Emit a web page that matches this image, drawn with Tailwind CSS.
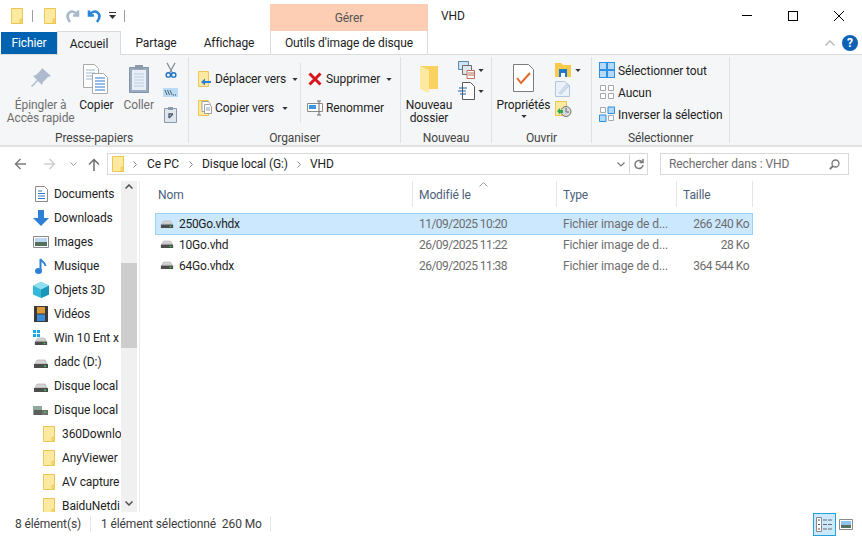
<!DOCTYPE html>
<html lang="fr">
<head>
<meta charset="UTF-8">
<title>VHD</title>
<script src="https://cdn.jsdelivr.net/npm/@tailwindcss/browser@4"></script>
</head>
<body class="bg-white">
<svg width="0" height="0" class="absolute">
  <defs>
    <symbol id="folder" viewBox="0 0 12 16">
      <path d="M.5.500h11v15H.5z" fill="#fde9a0" stroke="#ebc655"/>
      <path d="M9 11h2.500v4.500H9z" fill="#fbd35f" stroke="#ebc655" stroke-width=".6"/>
    </symbol>
    <symbol id="drive" viewBox="0 0 16 10">
      <path d="M2 4.500 4 1h8l2 3.500z" fill="#d4d4d4" stroke="#a8a8a8" stroke-width=".6"/>
      <path d="M1 5h14v4H1z" fill="#4d4d4d"/>
      <path d="M11 6.500h2v1.500h-2z" fill="#35d04a"/>
    </symbol>
    <symbol id="caret" viewBox="0 0 7 4"><path d="M0 0h7L3.500 4z" fill="#333"/></symbol>
  </defs>
</svg>

<div class="w-[862px] h-[536px] overflow-hidden flex flex-col bg-white text-[#1e1e1e] text-[12px] leading-[16px] tracking-[-0.1px] whitespace-nowrap font-['Roboto',sans-serif]">

  <!-- title bar -->
  <div class="h-[31px] flex shrink-0">
    <div class="w-[270px] flex items-center pl-[11px]">
      <svg class="w-[12px] h-[16px]"><use href="#folder"/></svg>
      <div class="w-px h-[12px] bg-[#a0a0a0] ml-[9px]"></div>
      <svg class="w-[12px] h-[16px] ml-[11px]"><use href="#folder"/></svg>
      <svg class="w-[16px] h-[16px] ml-[9px]" viewBox="0 0 16 16"><path d="M13 2.500v5H8M12.500 7C11 4 7 2.500 4.500 4.500 2 6.500 2 10 5 14" fill="none" stroke="#a9b8c9" stroke-width="2.600"/></svg>
      <svg class="w-[16px] h-[16px] ml-[5px]" viewBox="0 0 16 16"><path d="M3 2.500v5h5M3.500 7C5 4 9 2.500 11.500 4.500 14 6.500 14 10 11 14" fill="none" stroke="#2b84d6" stroke-width="2.600"/></svg>
      <svg class="w-[7px] h-[8px] ml-[7px]" viewBox="0 0 7 8"><path d="M0 0h7v1H0zM0 3h7L3.500 7z" fill="#333"/></svg>
      <div class="w-px h-[12px] bg-[#a0a0a0] ml-[8px]"></div>
    </div>
    <div class="w-[158px] mt-[4px] bg-[#fdcdb4] flex items-center justify-center text-[#555]">Gérer</div>
    <div class="pl-[13px] pt-[8px]">VHD</div>
    <div class="ml-auto flex">
      <div class="w-[46px] flex items-center justify-center"><div class="w-[10px] h-px bg-black"></div></div>
      <div class="w-[46px] flex items-center justify-center"><div class="w-[10px] h-[10px] border border-black"></div></div>
      <div class="w-[46px] flex items-center justify-center">
        <svg class="w-[10px] h-[10px]" viewBox="0 0 10 10"><path d="M0 0l10 10M10 0 0 10" stroke="#000" fill="none"/></svg>
      </div>
    </div>
  </div>

  <!-- tabs -->
  <div class="h-[24px] shrink-0 flex border-b border-[#dadbdc] pl-px">
    <div class="w-[56px] h-[22px] mt-px bg-[#0063b1] text-white flex items-center justify-center">Fichier</div>
    <div class="w-[64px] h-[24px] bg-[#f5f6f7] border border-b-0 border-[#dadbdc] flex items-center justify-center">Accueil</div>
    <div class="w-[70px] flex items-center justify-center">Partage</div>
    <div class="w-[76px] flex items-center justify-center">Affichage</div>
    <div class="w-[3px]"></div>
    <div class="w-[158px] border-l border-r border-[#dadbdc] flex items-center justify-center">Outils d'image de disque</div>
    <div class="ml-auto flex items-center pr-[4px] gap-[7px]">
      <svg class="w-[10px] h-[6px]" viewBox="0 0 10 6"><path d="M.5 5.500 5 1l4.500 4.500" fill="none" stroke="#b5b5b5" stroke-width="1.300"/></svg>
      <div class="w-[16px] h-[16px] rounded-full bg-[#0d62b5] text-white text-[12px] font-bold flex items-center justify-center">?</div>
    </div>
  </div>

  <!-- ribbon -->
  <div class="h-[92px] shrink-0 bg-[#f5f6f7] border-b-2 border-[#e1e2e3] flex pt-[2px] text-[#1e1e1e]">

    <!-- presse-papiers -->
    <div class="w-[189px] h-[86px] border-r border-[#e0e1e2] flex flex-col">
      <div class="flex-1 flex">
        <div class="w-[80px] flex flex-col items-center text-[#6f6f6f] pl-[2px]">
          <svg class="w-[22px] h-[22px] mt-[10px] mb-[10px]" viewBox="0 0 22 22"><path d="M12 1l9 8-3 1-5 5-1 3-4-4-6 6-1-1 6-6-4-4 3-1 5-5z" fill="#aebace"/></svg>
          <div class="text-center leading-[13px]">Épingler à<br>Accès rapide</div>
        </div>
        <div class="w-[32px] flex flex-col items-center pl-[2px]">
          <svg class="w-[26px] h-[30px] mt-[7px] mb-[5px]" viewBox="0 0 26 30"><path d="M.5.500h11l4 4v19H.500z" fill="#fff" stroke="#a9a9a9"/><path d="M3 6h9M3 9h9M3 12h9M3 15h9" stroke="#9bb5d8"/><path d="M9.500 9.500h11l4 4v16h-15z" fill="#fff" stroke="#a9a9a9"/><path d="M12 14h10M12 17h10M12 20h10M12 23h10M12 26h10" stroke="#2f78d0"/></svg>
          <div class="leading-[13px]">Copier</div>
        </div>
        <div class="w-[52px] flex flex-col items-center text-[#6f6f6f] pl-[3px]">
          <svg class="w-[20px] h-[29px] mt-[7px] mb-[6px]" viewBox="0 0 20 29"><path d="M.5 3.500h19v25H.500z" fill="#9cacc0" stroke="#8293a8"/><path d="M3 6h14v20H3z" fill="#e8eef6"/><path d="M5 10h10M5 13h10M5 16h10M5 19h10M5 22h10" stroke="#bccbe0"/><path d="M6 1h8v4H6z" fill="#8b99ab"/></svg>
          <div class="leading-[13px]">Coller</div>
        </div>
        <div class="flex-1 flex flex-col items-center pt-[5px] pr-[10px]">
          <svg class="w-[12px] h-[16px] mb-[10px]" viewBox="0 0 13 18"><path d="M2 1l6 11M11 1 5 12" stroke="#7f8a96" stroke-width="1.300" fill="none"/><circle cx="3.500" cy="14.500" r="2.500" fill="none" stroke="#1f74c7" stroke-width="1.600"/><circle cx="9.500" cy="14.500" r="2.500" fill="none" stroke="#1f74c7" stroke-width="1.600"/></svg>
          <svg class="w-[15px] h-[9px] mb-[10px]" viewBox="0 0 15 9"><path d="M0 0h15v9H0z" fill="#b8dcf6"/><path d="M2 2l2 5M4.500 2l2 5M7 2l2 5" stroke="#344" stroke-width=".8"/><path d="M10 7h1M12 7h1" stroke="#344"/></svg>
          <svg class="w-[13px] h-[16px]" viewBox="0 0 13 16"><path d="M.5 1.500h12v14H.5z" fill="#dfe6ee" stroke="#8a99ab"/><path d="M4 0h5v3H4z" fill="#8a99ab"/><path d="M5 11V7h4M9 7l-4 4" stroke="#4d5c70" stroke-width="1.300" fill="none"/></svg>
        </div>
      </div>
      <div class="h-[14px] pt-px text-center text-[#444]">Presse-papiers</div>
    </div>

    <!-- organiser -->
    <div class="w-[212px] h-[86px] border-r border-[#e0e1e2] flex flex-col">
      <div class="flex-1 flex">
        <div class="w-[112px] h-[60px] mt-[6px] border-r border-[#e0e1e2] pl-[9px] pt-[8px] flex flex-col gap-[13px]">
          <div class="flex items-center h-[16px]">
            <svg class="w-[13px] h-[16px] mr-[4px]" viewBox="0 0 13 16"><path d="M.5.500h10v15H.500z" fill="#fde9a0" stroke="#ebc655"/><path d="M3 11l4-3.500V10h6v2H7v2.500z" fill="#2d7fd5"/></svg>
            <span>Déplacer vers</span>
            <svg class="w-[6px] h-[3px] ml-[6px]"><use href="#caret"/></svg>
          </div>
          <div class="flex items-center h-[16px]">
            <svg class="w-[14px] h-[16px] mr-[3px]" viewBox="0 0 14 16"><path d="M.5.500h10v15H.500z" fill="#fde9a0" stroke="#ebc655"/><path d="M4 1.500h6l2 2v8H4z" fill="#fff" stroke="#8a8a8a" stroke-width=".8"/><path d="M6.500 4.500h5l2 2v7h-7z" fill="#fff" stroke="#8a8a8a" stroke-width=".8"/><path d="M8 8h4M8 10h4" stroke="#6a8ab0" stroke-width=".8"/></svg>
            <span>Copier vers</span>
            <svg class="w-[6px] h-[3px] ml-[8px]"><use href="#caret"/></svg>
          </div>
        </div>
        <div class="flex-1 pl-[7px] pt-[14px] flex flex-col gap-[13px]">
          <div class="flex items-center h-[16px]">
            <svg class="w-[14px] h-[14px] mr-[4px]" viewBox="0 0 14 14"><path d="M1.500 1.500l11 11M12.500 1.500l-11 11" stroke="#d8141c" stroke-width="3"/></svg>
            <span>Supprimer</span>
            <svg class="w-[6px] h-[3px] ml-[6px]"><use href="#caret"/></svg>
          </div>
          <div class="flex items-center h-[16px]">
            <svg class="w-[16px] h-[16px] mr-[3px] -ml-[1px]" viewBox="0 0 16 16"><path d="M.5 3.500h15v8H.500z" fill="#fff" stroke="#8a8a8a"/><path d="M2 5h7v4H2z" fill="#3b95e4"/><path d="M12 1v14M10 1h4M10 15h4" stroke="#6a6a6a"/></svg>
            <span>Renommer</span>
          </div>
        </div>
      </div>
      <div class="h-[14px] pt-px text-center text-[#444]">Organiser</div>
    </div>

    <!-- nouveau -->
    <div class="w-[91px] h-[86px] border-r border-[#e0e1e2] flex flex-col">
      <div class="flex-1 flex">
        <div class="w-[56px] flex flex-col items-center">
          <svg class="w-[19px] h-[28px] mt-[8px] mb-[6px]" viewBox="0 0 19 28"><path d="M0 1h18v23H0z" fill="#fbd25f"/><path d="M0 1l9 4v23L0 24z" fill="#fde9a0"/></svg>
          <div class="text-center leading-[13px]">Nouveau<br>dossier</div>
        </div>
        <div class="flex flex-col pl-[1px] pt-[4px] gap-[3px]">
          <div class="flex items-center gap-[3px]">
            <svg class="w-[17px] h-[18px]" viewBox="0 0 17 18"><path d="M.5.500h10v8H.5z" fill="#cfe4f5" stroke="#5b86b0"/><path d="M4.500 4.500h9v9h-9z" fill="#dde7f0" stroke="#6d6d6d"/><path d="M9 9.500h7.500v8H9z" fill="#fff" stroke="#c06d5c"/><path d="M10 12h6M10 14h6" stroke="#c06d5c"/></svg>
            <svg class="w-[6px] h-[3px]"><use href="#caret"/></svg>
          </div>
          <div class="flex items-center gap-[3px]">
            <svg class="w-[17px] h-[18px]" viewBox="0 0 17 18"><path d="M4.500.500h8l4 4v13h-12z" fill="#fff" stroke="#5a5a5a"/><path d="M1 6h8M0 9h8M2 12h6" stroke="#1f5fa8" stroke-width="1.200"/></svg>
            <svg class="w-[6px] h-[3px]"><use href="#caret"/></svg>
          </div>
        </div>
      </div>
      <div class="h-[14px] pt-px text-center text-[#444]">Nouveau</div>
    </div>

    <!-- ouvrir -->
    <div class="w-[100px] h-[86px] border-r border-[#e0e1e2] flex flex-col">
      <div class="flex-1 flex">
        <div class="w-[63px] flex flex-col items-center">
          <svg class="w-[21px] h-[28px] mt-[7px] mb-[7px]" viewBox="0 0 21 28"><path d="M.5.500h15l5 5v22H.500z" fill="#fff" stroke="#7c7c7c"/><path d="M4 14l4 5 9-10" fill="none" stroke="#e46a2c" stroke-width="2"/></svg>
          <div class="leading-[13px]">Propriétés</div>
          <svg class="w-[6px] h-[3px] mt-[3px]"><use href="#caret"/></svg>
        </div>
        <div class="flex flex-col pt-[6px] gap-[4px]">
          <div class="flex items-center gap-[4px]">
            <svg class="w-[16px] h-[14px]" viewBox="0 0 16 14"><path d="M0 0h6l2 2h8v12H0z" fill="#fbc94a"/><path d="M4 6h8v8H4z" fill="#1f79d1"/><path d="M6 10h4v4H6z" fill="#fff"/></svg>
            <svg class="w-[6px] h-[3px]"><use href="#caret"/></svg>
          </div>
          <svg class="w-[15px] h-[16px]" viewBox="0 0 15 16"><path d="M.5.500h9l5 4v11H.500z" fill="#eaf1f8" stroke="#b5c6da"/><path d="M4 12 12 3l2 2-8 8z" fill="#cfe0f0" stroke="#a8bed6" stroke-width=".6"/></svg>
          <svg class="w-[17px] h-[16px]" viewBox="0 0 17 16"><path d="M.5.500h11v14H.5z" fill="#fde9a0" stroke="#ebc655"/><circle cx="11" cy="10.500" r="5" fill="#d8d8d8" stroke="#777"/><path d="M11 7v4h3" stroke="#555" fill="none" stroke-width=".8"/><path d="M2 10l3-3v2h3v3H5v1.500z" fill="#2fa84f"/></svg>
        </div>
      </div>
      <div class="h-[14px] pt-px text-center text-[#444]">Ouvrir</div>
    </div>

    <!-- selectionner -->
    <div class="w-[138px] h-[86px] border-r border-[#e0e1e2] flex flex-col">
      <div class="flex-1 flex flex-col pl-[7px] pt-[5px] gap-[6px]">
        <div class="flex items-center h-[16px] gap-[3px]">
          <svg class="w-[16px] h-[16px]" viewBox="0 0 16 16"><path d="M0 0h16v16H0z" fill="#2f8fe0"/><path d="M1 1h6v6H1zM9 1h6v6H9zM1 9h6v6H1zM9 9h6v6H9z" fill="#b3dafa"/></svg>
          <span class="pt-px">Sélectionner tout</span>
        </div>
        <div class="flex items-center h-[16px] gap-[3px]">
          <svg class="w-[16px] h-[16px]" viewBox="0 0 16 16"><path d="M1.500 1.500h5v5h-5zM9.500 1.500h5v5h-5zM1.500 9.500h5v5h-5zM9.500 9.500h5v5h-5z" fill="#fff" stroke="#a8a8a8"/></svg>
          <span class="pt-px">Aucun</span>
        </div>
        <div class="flex items-center h-[16px] gap-[3px]">
          <svg class="w-[16px] h-[16px]" viewBox="0 0 16 16"><path d="M1.500 1.500h5v5h-5zM9.500 9.500h5v5h-5z" fill="#fff" stroke="#a8a8a8"/><path d="M9 1h6.500v6.500H9zM.5 9H7v6.500H.500z" fill="#b3dafa" stroke="#2f8fe0"/></svg>
          <span class="pt-px">Inverser la sélection</span>
        </div>
      </div>
      <div class="h-[14px] pt-px text-center text-[#444]">Sélectionner</div>
    </div>
  </div>

  <!-- address bar -->
  <div class="h-[34px] shrink-0 flex items-center">
    <svg class="w-[12px] h-[12px] ml-[14px]" viewBox="0 0 12 12"><path d="M12 6H1.500M6.500 1 1.500 6l5 5" fill="none" stroke="#7c7c7c" stroke-width="1.500"/></svg>
    <svg class="w-[12px] h-[12px] ml-[18px]" viewBox="0 0 12 12"><path d="M0 6h10.500M5.500 1l5 5-5 5" fill="none" stroke="#cfcfcf" stroke-width="1.500"/></svg>
    <svg class="w-[7px] h-[4px] ml-[14px]" viewBox="0 0 7 4"><path d="M.5.500l3 3 3-3" fill="none" stroke="#9a9a9a"/></svg>
    <svg class="w-[12px] h-[13px] ml-[11px]" viewBox="0 0 12 13"><path d="M6 13V2M1 6.500l5-5 5 5" fill="none" stroke="#6e6e6e" stroke-width="1.500"/></svg>
    <div class="w-[541px] h-[22px] ml-[7px] border border-[#d9d9d9] flex items-center">
      <svg class="w-[12px] h-[16px] ml-[4px]"><use href="#folder"/></svg>
      <svg class="w-[4px] h-[7px] ml-[9px]" viewBox="0 0 4 7"><path d="M.5.500l3 3-3 3" fill="none" stroke="#8a8a8a"/></svg>
      <span class="ml-[10px]">Ce PC</span>
      <svg class="w-[4px] h-[7px] ml-[10px]" viewBox="0 0 4 7"><path d="M.5.500l3 3-3 3" fill="none" stroke="#8a8a8a"/></svg>
      <span class="ml-[9px]">Disque local (G:)</span>
      <svg class="w-[4px] h-[7px] ml-[9px]" viewBox="0 0 4 7"><path d="M.5.500l3 3-3 3" fill="none" stroke="#8a8a8a"/></svg>
      <span class="ml-[9px]">VHD</span>
      <svg class="w-[8px] h-[5px] ml-auto mr-[2px]" viewBox="0 0 8 5"><path d="M.5.500 4 4 7.500.500" fill="none" stroke="#777" stroke-width="1.200"/></svg>
      <div class="w-px h-[20px] bg-[#d9d9d9] ml-[2px]"></div>
      <svg class="w-[10px] h-[12px] ml-[4px] mr-[3px]" viewBox="0 0 10 12"><path d="M8.500 4.500A4 4 0 1 0 9 7M9 1v3.500H5.500" fill="none" stroke="#7a7a7a" stroke-width="1.500"/></svg>
    </div>
    <div class="w-[189px] h-[22px] ml-[12px] border border-[#d9d9d9] flex items-center pl-[8px] text-[#6d6d6d]">
      <span>Rechercher dans : VHD</span>
      <svg class="w-[11px] h-[11px] ml-auto mr-[8px]" viewBox="0 0 11 11"><circle cx="6.500" cy="4.500" r="3.500" fill="none" stroke="#777" stroke-width="1.300"/><path d="M4 7 .8 10.200" stroke="#777" stroke-width="1.800"/></svg>
    </div>
  </div>

  <!-- body -->
  <div class="flex-1 flex min-h-0">
    <!-- nav pane -->
    <div class="w-[140px] shrink-0 flex border-r border-[#ececec] overflow-hidden">
      <div class="w-[121px] shrink-0 overflow-hidden pt-px">
        <div class="h-[24px] flex items-center pl-[35px]">
          <svg class="w-[13px] h-[16px] mr-[6px] shrink-0" viewBox="0 0 13 16"><path d="M.5.500h9l3 3v12H.500z" fill="#fff" stroke="#8a8a8a"/><path d="M3 5h4M3 7.500h7M3 10h7M3 12.500h7" stroke="#2f78d0"/></svg><span>Documents</span>
        </div>
        <div class="h-[24px] flex items-center pl-[33px]">
          <svg class="w-[16px] h-[16px] mr-[5px] shrink-0" viewBox="0 0 16 16"><path d="M5 0h6v8h5l-8 8-8-8h5z" fill="#2d80d6"/></svg><span>Downloads</span>
        </div>
        <div class="h-[24px] flex items-center pl-[33px]">
          <svg class="w-[16px] h-[12px] mr-[5px] shrink-0" viewBox="0 0 16 12"><path d="M.5.500h15v11H.5z" fill="#fff" stroke="#8a8a8a"/><path d="M2 2h12v4H2z" fill="#bcd7ef"/><path d="M2 6h12v4H2z" fill="#55705f"/></svg><span>Images</span>
        </div>
        <div class="h-[24px] flex items-center pl-[35px]">
          <svg class="w-[12px] h-[16px] mr-[7px] shrink-0" viewBox="0 0 12 16"><path d="M5.500 13V1c1 3 5 3 5 7" fill="none" stroke="#2d80d6" stroke-width="2"/><ellipse cx="3.500" cy="13" rx="3.500" ry="3" fill="#2d80d6"/></svg><span>Musique</span>
        </div>
        <div class="h-[24px] flex items-center pl-[33px]">
          <svg class="w-[16px] h-[16px] mr-[5px] shrink-0" viewBox="0 0 16 16"><path d="M8 0l8 3.500v9L8 16l-8-3.500v-9z" fill="#33b8d8"/><path d="M8 7.500 16 3.500v9L8 16z" fill="#1a96bb"/><path d="M8 0l8 3.500-8 4-8-4z" fill="#8fe0ef"/></svg><span>Objets 3D</span>
        </div>
        <div class="h-[24px] flex items-center pl-[34px]">
          <svg class="w-[14px] h-[16px] mr-[6px] shrink-0" viewBox="0 0 14 16"><path d="M0 0h14v16H0z" fill="#3a3a3a"/><path d="M3 1h8v6.500H3z" fill="#d89a3a"/><path d="M3 8.500h8V15H3z" fill="#3a8ad8"/></svg><span>Vidéos</span>
        </div>
        <div class="h-[24px] flex items-center pl-[33px]">
          <div class="relative w-[16px] h-[16px] mr-[5px] shrink-0">
            <svg class="absolute left-[1px] bottom-0 w-[14px] h-[9px]"><use href="#drive"/></svg>
            <svg class="absolute left-0 top-0 w-[7px] h-[7px]" viewBox="0 0 7 7"><path d="M0 0h3v3H0zM4 0h3v3H4zM0 4h3v3H0zM4 4h3v3H4z" fill="#15a6ee"/></svg>
          </div><span>Win 10 Ent x</span>
        </div>
        <div class="h-[24px] flex items-center pl-[33px]">
          <svg class="w-[16px] h-[10px] mr-[5px] shrink-0 mt-[4px]"><use href="#drive"/></svg><span>dadc (D:)</span>
        </div>
        <div class="h-[24px] flex items-center pl-[33px]">
          <svg class="w-[16px] h-[10px] mr-[5px] shrink-0 mt-[4px]"><use href="#drive"/></svg><span>Disque local</span>
        </div>
        <div class="h-[24px] flex items-center pl-[33px]">
          <svg class="w-[16px] h-[10px] mr-[5px] shrink-0" viewBox="0 0 16 10"><path d="M0 1h9v9H0z" fill="#8fa89a"/><path d="M1 5h14v5H1z" fill="#4d4d4d" opacity=".8"/><path d="M11 6.500h2V8h-2z" fill="#35d04a"/></svg><span>Disque local</span>
        </div>
        <div class="h-[24px] flex items-center pl-[43px]">
          <svg class="w-[12px] h-[16px] mr-[7px] shrink-0"><use href="#folder"/></svg><span>360Downlo</span>
        </div>
        <div class="h-[24px] flex items-center pl-[43px]">
          <svg class="w-[12px] h-[16px] mr-[7px] shrink-0"><use href="#folder"/></svg><span>AnyViewer</span>
        </div>
        <div class="h-[24px] flex items-center pl-[43px]">
          <svg class="w-[12px] h-[16px] mr-[7px] shrink-0"><use href="#folder"/></svg><span>AV capture</span>
        </div>
        <div class="h-[24px] flex items-center pl-[43px]">
          <svg class="w-[12px] h-[16px] mr-[7px] shrink-0"><use href="#folder"/></svg><span>BaiduNetdi</span>
        </div>
      </div>
      <!-- scrollbar -->
      <div class="w-[16px] shrink-0 bg-[#f0f0f0] flex flex-col pt-[3px]">
        <svg class="w-[8px] h-[5px] mx-auto" viewBox="0 0 8 5"><path d="M.5 4.500 4 1l3.500 3.500" fill="none" stroke="#505050" stroke-width="1.500"/></svg>
        <div class="h-[85px] bg-[#cdcdcd] mt-[74px]"></div>
        <svg class="w-[8px] h-[5px] mx-auto mt-auto mb-[6px]" viewBox="0 0 8 5"><path d="M.5.500 4 4 7.500.500" fill="none" stroke="#505050" stroke-width="1.500"/></svg>
      </div>
    </div>

    <!-- file list -->
    <div class="flex-1 flex flex-col min-w-0 pl-[15px] text-[#6d6d6d]">
      <div class="relative h-[32px] flex text-[#4c607a]">
        <div class="w-[258px] h-[26px] border-r border-[#e5e5e5] pl-[3px] pt-[2px] flex items-center">Nom</div>
        <div class="w-[144px] h-[26px] border-r border-[#e5e5e5] pl-[6px] pt-[2px] flex items-center relative">Modifié le
          <svg class="absolute left-[66px] top-[1px] w-[9px] h-[5px]" viewBox="0 0 9 5"><path d="M.5 4.500l4-4 4 4" fill="none" stroke="#9a9a9a"/></svg>
        </div>
        <div class="w-[120px] h-[26px] border-r border-[#e5e5e5] pl-[6px] pt-[2px] flex items-center">Type</div>
        <div class="w-[76px] h-[26px] border-r border-[#e5e5e5] pl-[6px] pt-[2px] flex items-center">Taille</div>
      </div>
      <div class="w-[598px] h-[22px] -mb-px bg-[#cce8ff] border border-[#99d1ff] flex items-center">
        <div class="w-[257px] flex items-center pl-[4px] text-[#1e1e1e] tracking-[-0.3px]"><svg class="w-[14px] h-[9px] mr-[5px]"><use href="#drive"/></svg>250Go.vhdx</div>
        <div class="w-[144px] pl-[6px] tracking-[-0.55px]">11/09/2025 10:20</div>
        <div class="w-[120px] pl-[6px]">Fichier image de d...</div>
        <div class="w-[75px] pr-[3px] text-right tracking-[-0.5px]">266 240 Ko</div>
      </div>
      <div class="w-[598px] h-[21px] border border-transparent flex items-center">
        <div class="w-[257px] flex items-center pl-[4px] text-[#1e1e1e] tracking-[-0.2px]"><svg class="w-[14px] h-[9px] mr-[5px]"><use href="#drive"/></svg>10Go.vhd</div>
        <div class="w-[144px] pl-[6px] tracking-[-0.55px]">26/09/2025 11:22</div>
        <div class="w-[120px] pl-[6px]">Fichier image de d...</div>
        <div class="w-[75px] pr-[3px] text-right tracking-[-0.5px]">28 Ko</div>
      </div>
      <div class="w-[598px] h-[21px] border border-transparent flex items-center">
        <div class="w-[257px] flex items-center pl-[4px] text-[#1e1e1e] tracking-[-0.2px]"><svg class="w-[14px] h-[9px] mr-[5px]"><use href="#drive"/></svg>64Go.vhdx</div>
        <div class="w-[144px] pl-[6px] tracking-[-0.55px]">26/09/2025 11:38</div>
        <div class="w-[120px] pl-[6px]">Fichier image de d...</div>
        <div class="w-[75px] pr-[3px] text-right tracking-[-0.5px]">364 544 Ko</div>
      </div>
    </div>
  </div>

  <!-- status bar -->
  <div class="h-[24px] shrink-0 flex items-center pl-[15px] text-[#3c3c3c]">
    <div class="w-[76px] border-r border-[#e5e5e5]">8 élément(s)</div>
    <div class="w-[180px] pl-[10px] border-r border-[#e5e5e5] whitespace-pre">1 élément sélectionné  260 Mo</div>
    <div class="ml-auto flex items-center gap-[3px] pr-[9px]">
      <div class="w-[23px] h-[23px] bg-[#cce8ff] border border-[#26a0da] flex items-center justify-center">
        <svg class="w-[17px] h-[15px]" viewBox="0 0 17 15"><path d="M.5.500h5v14h-5z" fill="#fff" stroke="#8a8a8a"/><path d="M2 2.500h2v1H2zM2 7h2v1H2z" fill="#555"/><path d="M2 11.500h2v1H2z" fill="#b03030"/><path d="M7 3h4M12 3h4M7 7.500h4M12 7.500h4M7 12h4M12 12h4" stroke="#6a6a6a"/></svg>
      </div>
      <svg class="w-[14px] h-[11px]" viewBox="0 0 14 11"><path d="M.5.500h13v10H.5z" fill="#fff" stroke="#8a8a8a"/><path d="M2 2h10v4H2z" fill="#8ec5ef"/><path d="M2 6h10v3H2z" fill="#55705f"/></svg>
    </div>
  </div>
</div>
</body>
</html>
